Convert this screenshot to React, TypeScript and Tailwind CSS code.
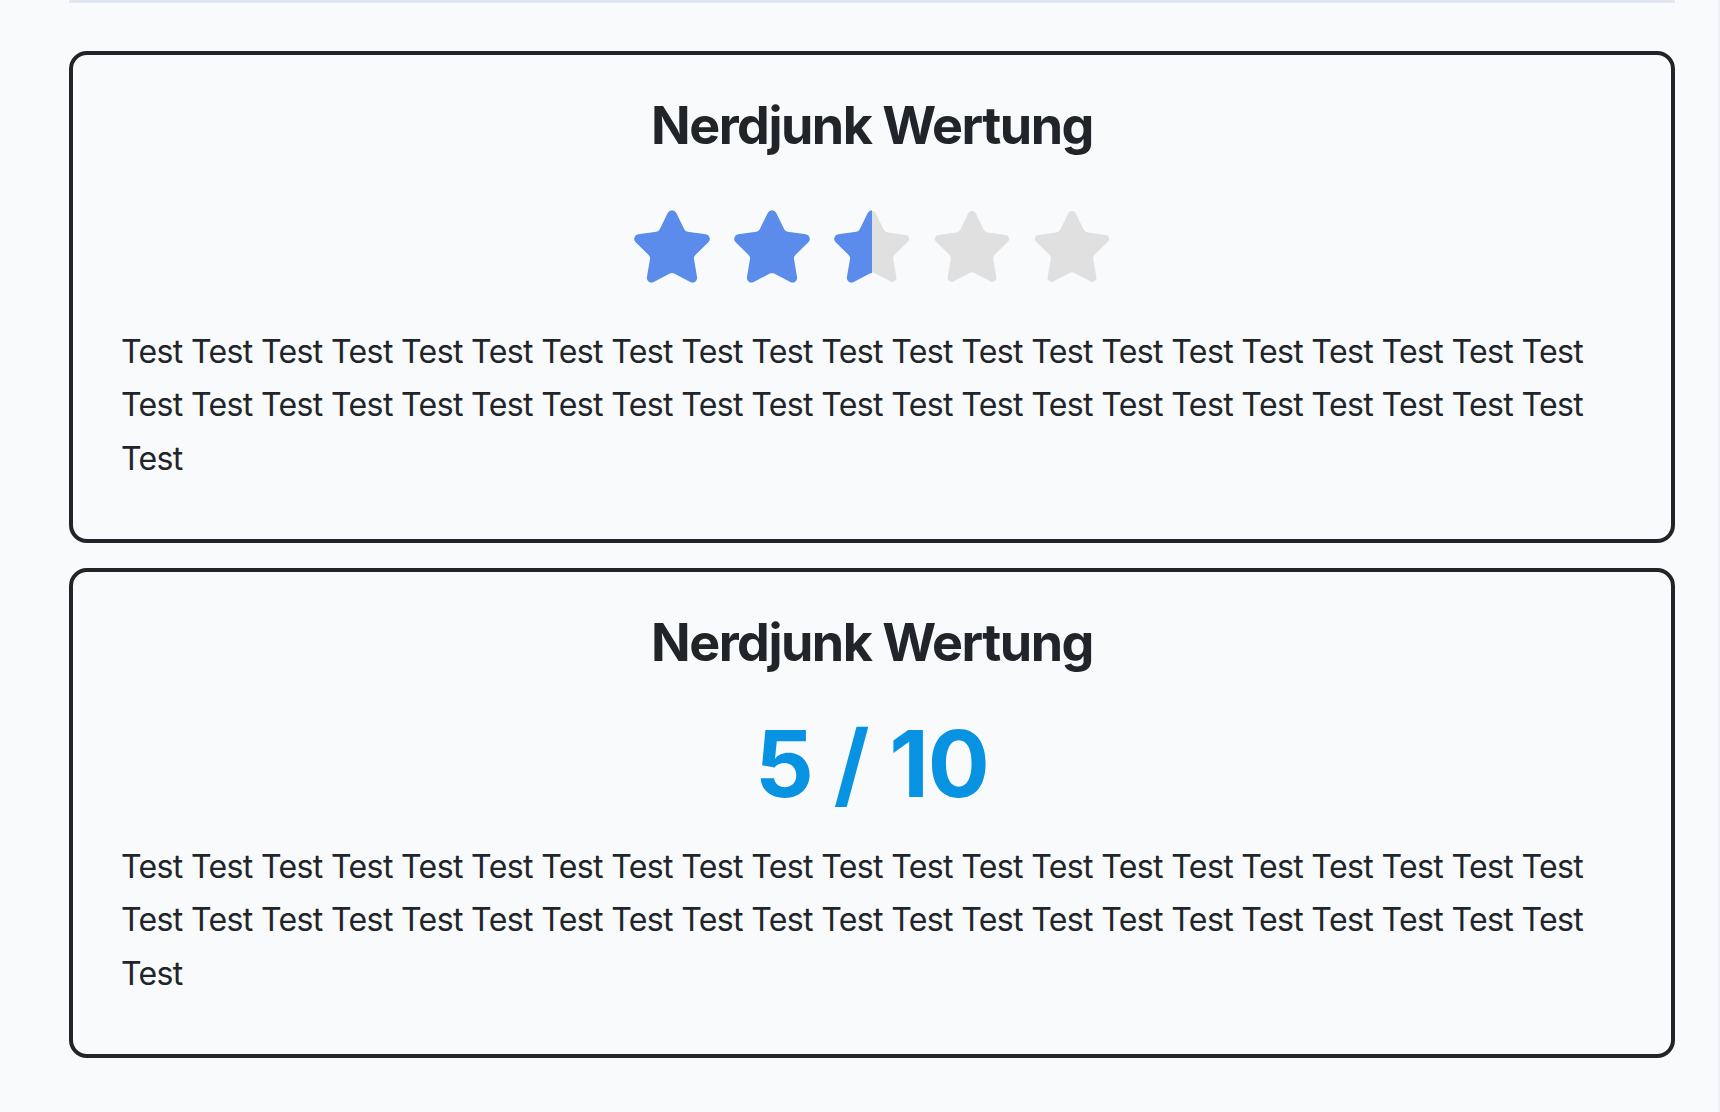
import React from "react";

const STAR =
  "M11.525 2.295a.53.53 0 0 1 .95 0l2.31 4.679a2.123 2.123 0 0 0 1.595 1.16l5.166.756a.53.53 0 0 1 .294.904l-3.736 3.638a2.123 2.123 0 0 0-.611 1.878l.882 5.14a.53.53 0 0 1-.771.56l-4.618-2.428a2.122 2.122 0 0 0-1.973 0L6.396 21.01a.53.53 0 0 1-.77-.56l.881-5.139a2.122 2.122 0 0 0-.611-1.879L2.16 9.795a.53.53 0 0 1 .294-.906l5.165-.755a2.122 2.122 0 0 0 1.597-1.16z";

function Star({ fill }: { fill: number }) {
  const id = React.useId().replace(/:/g, "");
  return (
    <svg width="84" height="84" viewBox="0 0 24 24" className="block overflow-visible">
      <defs>
        <clipPath id={`c${id}`}>
          <rect x="-2" y="-2" width={2 + 24 * fill} height="28" />
        </clipPath>
      </defs>
      <path
        d={STAR}
        fill="#e0e0e0"
        stroke="#e0e0e0"
        strokeWidth="1.2"
        strokeLinejoin="round"
      />
      {fill > 0 && (
        <path
          d={STAR}
          fill="#5b8cec"
          stroke="#5b8cec"
          strokeWidth="1.6"
          strokeLinejoin="round"
          clipPath={`url(#c${id})`}
        />
      )}
    </svg>
  );
}

const text = Array.from({ length: 43 }, () => "Test").join(" ");

function Card({ children }: { children: React.ReactNode }) {
  return (
    <div className="border-4 border-[#212529] rounded-[18px] pt-[37px] pb-[54px] px-[48px]">
      <h2 className="text-center text-[52px] leading-[67px] font-bold tracking-[-1.5px] text-[#212529]">
        Nerdjunk Wertung
      </h2>
      {children}
      <p className="text-[32px] leading-[53.33px] tracking-[-0.63px] text-[#212529]">{text}</p>
    </div>
  );
}

export default function App() {
  return (
    <div
      className="min-h-screen bg-[#f8fafc] flex"
      style={{ fontFamily: "Inter, 'Noto Sans', sans-serif" }}
    >
      <div className="ml-[69px] w-[1606px]">
        <div className="h-[3px] bg-[#e2e8f0]" />
        <div className="mt-[48px] flex flex-col gap-[25px] pb-[55px]">
          <Card>
            <div className="flex justify-center gap-[16px] mt-[47px] mb-[35px]">
              <Star fill={1} />
              <Star fill={1} />
              <Star fill={0.5} />
              <Star fill={0} />
              <Star fill={0} />
            </div>
          </Card>
          <Card>
            <div className="text-center text-[92px] leading-[110px] font-bold tracking-[-1px] text-[#0793e1] mt-[33px] mb-[21px]">
              5 / 10
            </div>
          </Card>
        </div>
      </div>
      <div className="ml-auto w-[2px] bg-[#eef0f3]" />
    </div>
  );
}
